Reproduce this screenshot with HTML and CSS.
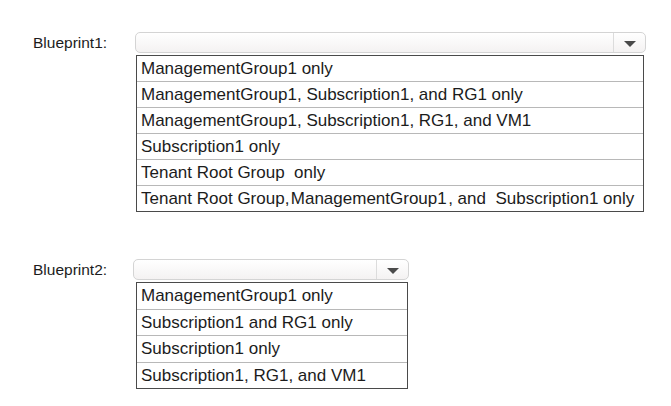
FILE: index.html
```html
<!DOCTYPE html>
<html>
<head>
<meta charset="utf-8">
<link rel="stylesheet" href="styles.css">
</head>
<body>
<div class="page">
  <div class="question q1">
    <div class="label">Blueprint1:</div>
    <div class="dropdown">
      <div class="select">
        <div class="select-value"></div>
        <div class="select-arrow"><span class="tri"></span></div>
      </div>
      <ul class="options">
        <li>ManagementGroup1 only</li>
        <li>ManagementGroup1, Subscription1, and RG1 only</li>
        <li>ManagementGroup1, Subscription1, RG1, and VM1</li>
        <li>Subscription1 only</li>
        <li>Tenant Root Group&nbsp; only</li>
        <li>Tenant Root Group,&#8202;ManagementGroup1&#8202;, and&nbsp; Subscription1 only</li>
      </ul>
    </div>
  </div>
  <div class="question q2">
    <div class="label">Blueprint2:</div>
    <div class="dropdown">
      <div class="select">
        <div class="select-value"></div>
        <div class="select-arrow"><span class="tri"></span></div>
      </div>
      <ul class="options">
        <li>ManagementGroup1 only</li>
        <li>Subscription1 and RG1 only</li>
        <li>Subscription1 only</li>
        <li>Subscription1, RG1, and VM1</li>
      </ul>
    </div>
  </div>
</div>
</body>
</html>
```
FILE: styles.css
```css
html, body {
  margin: 0;
  padding: 0;
  background: #fff;
}
body {
  font-family: "Liberation Sans", Arial, sans-serif;
  color: #1c1c1c;
}
.page {
  padding: 32px 0 0 33px;
  display: flex;
  flex-direction: column;
  gap: 47px;
}
.question {
  display: flex;
  align-items: flex-start;
}
.label {
  font-size: 15.5px;
  line-height: 22px;
  width: 102px;
  flex: none;
}
.q2 .label {
  width: 100px;
}
.dropdown {
  display: flex;
  flex-direction: column;
}
.select {
  display: flex;
  height: 19px;
  border: 1px solid #d4d4d4;
  border-radius: 5px;
  background: linear-gradient(#ffffff, #f4f2f2);
}
.q1 .select { width: 509px; }
.q2 .select { width: 274px; }
.select-value {
  flex: 1;
}
.select-arrow {
  width: 31px;
  border-left: 1px solid #dcdcdc;
  display: flex;
  align-items: center;
  justify-content: center;
}
.tri {
  width: 0;
  height: 0;
  border-left: 6px solid transparent;
  border-right: 6px solid transparent;
  border-top: 6px solid #4a4a4a;
  margin-top: 2px;
}
.options {
  list-style: none;
  margin: 2px 0 0 1px;
  padding: 0;
  border: 1.5px solid #4a4a4a;
  border-top-width: 1px;
  font-size: 17px;
  background: #fff;
}
.q1 .options { width: 506px; }
.q2 .options { width: 270px; margin-left: 3px; }
.options li {
  height: 25px;
  line-height: 26px;
  padding-left: 4px;
  border-top: 1px solid #b8b8b8;
  white-space: nowrap;
}
.q2 .options li {
  height: 25.5px;
}
.options li:first-child {
  border-top: none;
}
```
